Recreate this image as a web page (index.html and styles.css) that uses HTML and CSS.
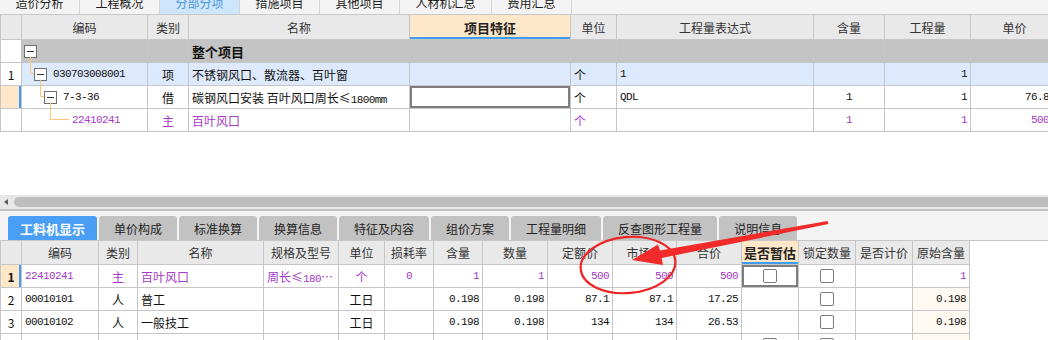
FILE: index.html
```html
<!DOCTYPE html>
<html lang="zh">

<head>
    <meta charset="UTF-8">
    <title>分部分项 - 工料机显示</title>
    <link rel="stylesheet" href="styles.css">
</head>

<body>
    <div class="sheet">
        <div class="top-tabs">
            <div class="ttab">造价分析</div>
            <div class="ttab">工程概况</div>
            <div class="ttab active">分部分项</div>
            <div class="ttab">措施项目</div>
            <div class="ttab">其他项目</div>
            <div class="ttab">人材机汇总</div>
            <div class="ttab">费用汇总</div>
        </div>

        <!-- 分部分项 list -->
        <div class="grid top-grid">
            <div class="row head">
                <div class="cell"></div>
                <div class="cell">编码</div>
                <div class="cell">类别</div>
                <div class="cell">名称</div>
                <div class="cell hl">项目特征</div>
                <div class="cell">单位</div>
                <div class="cell">工程量表达式</div>
                <div class="cell">含量</div>
                <div class="cell">工程量</div>
                <div class="cell">单价</div>
            </div>
            <div class="row group">
                <div class="cell idx"></div>
                <div class="cell code"><span class="fold"></span></div>
                <div class="cell"></div>
                <div class="cell l strong">整个项目</div>
                <div class="cell"></div>
                <div class="cell"></div>
                <div class="cell"></div>
                <div class="cell"></div>
                <div class="cell"></div>
                <div class="cell"></div>
            </div>
            <div class="row picked">
                <div class="cell idx">1</div>
                <div class="cell code"><span class="fold lv1"></span><span class="n">030703008001</span></div>
                <div class="cell">项</div>
                <div class="cell l">不锈钢风口、散流器、百叶窗</div>
                <div class="cell"></div>
                <div class="cell l">个</div>
                <div class="cell l n">1</div>
                <div class="cell"></div>
                <div class="cell r n">1</div>
                <div class="cell"></div>
            </div>
            <div class="row">
                <div class="cell idx cur"></div>
                <div class="cell code"><span class="fold lv2"></span><span class="n">7-3-36</span></div>
                <div class="cell">借</div>
                <div class="cell l"><span>碳钢风口安装 百叶风口周长≤<span class="n">1800mm</span></span></div>
                <div class="cell sel"></div>
                <div class="cell l">个</div>
                <div class="cell l n">QDL</div>
                <div class="cell n">1</div>
                <div class="cell r n">1</div>
                <div class="cell r n">76.84</div>
            </div>
            <div class="row pur">
                <div class="cell idx"></div>
                <div class="cell code"><span class="n lv3">22410241</span></div>
                <div class="cell">主</div>
                <div class="cell l">百叶风口</div>
                <div class="cell"></div>
                <div class="cell l">个</div>
                <div class="cell"></div>
                <div class="cell n">1</div>
                <div class="cell r n">1</div>
                <div class="cell r n">500.</div>
            </div>
        </div>

        <div class="blank"></div>

        <div class="hscroll">
            <span class="scroll-left"></span>
            <div class="thumb"></div>
        </div>

        <div class="btabs">
            <div class="btab active">工料机显示</div>
            <div class="btab">单价构成</div>
            <div class="btab">标准换算</div>
            <div class="btab">换算信息</div>
            <div class="btab">特征及内容</div>
            <div class="btab">组价方案</div>
            <div class="btab">工程量明细</div>
            <div class="btab">反查图形工程量</div>
            <div class="btab">说明信息</div>
        </div>

        <!-- 工料机 list -->
        <div class="grid low-grid">
            <div class="row head">
                <div class="cell"></div>
                <div class="cell">编码</div>
                <div class="cell">类别</div>
                <div class="cell">名称</div>
                <div class="cell">规格及型号</div>
                <div class="cell">单位</div>
                <div class="cell">损耗率</div>
                <div class="cell">含量</div>
                <div class="cell">数量</div>
                <div class="cell">定额价</div>
                <div class="cell">市场价</div>
                <div class="cell">合价</div>
                <div class="cell hl">是否暂估</div>
                <div class="cell">锁定数量</div>
                <div class="cell">是否计价</div>
                <div class="cell">原始含量</div>
            </div>
            <div class="row pur">
                <div class="cell idx cur bold">1</div>
                <div class="cell l n">22410241</div>
                <div class="cell">主</div>
                <div class="cell l">百叶风口</div>
                <div class="cell l"><span>周长≤<span class="n">180</span>…</span></div>
                <div class="cell">个</div>
                <div class="cell n">0</div>
                <div class="cell r n">1</div>
                <div class="cell r n">1</div>
                <div class="cell r n">500</div>
                <div class="cell r n">500</div>
                <div class="cell r n">500</div>
                <div class="cell sel"><span class="chk"></span></div>
                <div class="cell"><span class="chk"></span></div>
                <div class="cell"></div>
                <div class="cell r n">1</div>
            </div>
            <div class="row">
                <div class="cell idx">2</div>
                <div class="cell l n">00010101</div>
                <div class="cell">人</div>
                <div class="cell l">普工</div>
                <div class="cell"></div>
                <div class="cell">工日</div>
                <div class="cell"></div>
                <div class="cell r n">0.198</div>
                <div class="cell r n">0.198</div>
                <div class="cell r n">87.1</div>
                <div class="cell r n">87.1</div>
                <div class="cell r n">17.25</div>
                <div class="cell"></div>
                <div class="cell"><span class="chk"></span></div>
                <div class="cell"></div>
                <div class="cell r n soft">0.198</div>
            </div>
            <div class="row">
                <div class="cell idx">3</div>
                <div class="cell l n">00010102</div>
                <div class="cell">人</div>
                <div class="cell l">一般技工</div>
                <div class="cell"></div>
                <div class="cell">工日</div>
                <div class="cell"></div>
                <div class="cell r n">0.198</div>
                <div class="cell r n">0.198</div>
                <div class="cell r n">134</div>
                <div class="cell r n">134</div>
                <div class="cell r n">26.53</div>
                <div class="cell"></div>
                <div class="cell"><span class="chk"></span></div>
                <div class="cell"></div>
                <div class="cell r n soft">0.198</div>
            </div>
            <div class="row">
                <div class="cell idx">4</div>
                <div class="cell l n">01290011</div>
                <div class="cell">材</div>
                <div class="cell l">镀锌钢板</div>
                <div class="cell l">综合</div>
                <div class="cell">kg</div>
                <div class="cell"></div>
                <div class="cell r n">1.2</div>
                <div class="cell r n">1.2</div>
                <div class="cell r n">4.5</div>
                <div class="cell r n">4.5</div>
                <div class="cell r n">5.4</div>
                <div class="cell"><span class="chk"></span></div>
                <div class="cell"><span class="chk"></span></div>
                <div class="cell"></div>
                <div class="cell r n soft">1.2</div>
            </div>
        </div>

        <!-- tree connectors of the 编码 column -->
        <svg class="tree-lines" width="1048" height="340" viewBox="0 0 1048 340">
            <path d="M30.5 56.5V73.5H34 M40.5 79.5V96.5H44 M50.5 102.5V119.5H69" fill="none" stroke="#ffc477" stroke-width="1"/>
        </svg>

        <!-- red markup drawn on the screenshot -->
        <svg class="markup" width="1048" height="340" viewBox="0 0 1048 340">
            <ellipse cx="628" cy="265" rx="47.5" ry="28" transform="rotate(-5 628 265)" fill="none" stroke="#f02424" stroke-width="2.2"/>
            <polygon points="632,260 658,244.5 660,250.5 827.6,221 828.4,224 661.6,258 663,265" fill="#f22a2a"/>
        </svg>
    </div>
</body>

</html>
```

FILE: styles.css
```css
body {
    margin: 0;
    background-color: #fff;
    font-family: "Noto Sans CJK SC", "Liberation Sans", sans-serif;
    font-size: 12px;
    color: #111;
    overflow: hidden;
}

.sheet {
    position: relative;
    width: 1048px;
    height: 340px;
    overflow: hidden;
}

/* top page tabs, cut at the top edge */
.top-tabs {
    display: flex;
    height: 15px;
    box-sizing: border-box;
    overflow: hidden;
    background-color: #f4f4f4;
    border-bottom: 1px solid #c8c8c8;
}

.ttab {
    display: flex;
    align-items: flex-end;
    height: 14px;
    box-sizing: border-box;
    padding: 0 15.5px 5.5px;
    line-height: 12px;
    border-right: 1px solid #d4d4d4;
    color: #1c1c1c;
}

.ttab.active {
    background-color: #cde6fb;
    color: #4f97dc;
}

/* grids */
.grid {
    width: max-content;
    border-left: 1px solid #c6c6c6;
}

.grid .row {
    display: grid;
}

.top-grid .row {
    grid-template-columns: 21px 126px 41px 221px 161px 46px 197px 71px 86px 88px;
}

.low-grid .row {
    grid-template-columns: 21px 77px 39px 126px 75px 46px 49px 49px 65px 65px 64px 65px 57px 57px 57px 57px;
}

.cell {
    display: flex;
    align-items: center;
    justify-content: center;
    height: 23px;
    box-sizing: border-box;
    padding: 0 3px;
    border-right: 1px solid #c6c6c6;
    border-bottom: 1px solid #c6c6c6;
    white-space: nowrap;
    overflow: hidden;
}

.l {
    justify-content: flex-start;
}

.r {
    justify-content: flex-end;
}

.n {
    font-family: "Liberation Mono", monospace;
    font-size: 11px;
    letter-spacing: -0.6px;
}

.head .cell {
    height: 25px;
    background-color: #e9e9e9;
    color: #333;
}

.low-grid .head .cell {
    height: 24px;
}

.head .cell.hl {
    background-color: #ffe8c9;
    font-weight: bold;
    font-size: 13px;
    color: #222;
    box-shadow: inset 0 -2px 0 #3f9bf4;
}

.group .cell {
    background-color: #c4c4c4;
}

.picked .cell {
    background-color: #dde9fc;
}

.group .cell.idx,
.picked .cell.idx {
    background-color: #fff;
}

.strong {
    font-weight: bold;
    font-size: 13px;
}

.bold {
    font-weight: bold;
}

.cell.cur {
    background-color: #ffe8c9;
    box-shadow: inset -2px 0 0 #3f9bf4;
}

.cell.sel {
    box-shadow: inset 0 0 0 2px #7e7e7e;
}

.pur .cell {
    color: #a43ac5;
}

.pur .cell.idx {
    color: #111;
}

.cell.soft {
    background-color: #fff9f1;
}

/* tree column */
.code {
    justify-content: flex-start;
    padding-left: 2px;
}

.fold {
    display: inline-flex;
    align-items: center;
    justify-content: center;
    flex: none;
    width: 13px;
    height: 13px;
    box-sizing: border-box;
    margin-right: 6px;
    border: 1px solid #707070;
    background-color: #fff;
}

.fold::before {
    content: "";
    width: 7px;
    height: 1px;
    background-color: #333;
}

.fold.lv1 {
    margin-left: 10px;
}

.fold.lv2 {
    margin-left: 20px;
}

.lv3 {
    margin-left: 48px;
}

.chk {
    width: 14px;
    height: 14px;
    box-sizing: border-box;
    border: 1px solid #7c7c7c;
    border-radius: 2px;
    background-color: #fff;
}

.blank {
    height: 63px;
}

/* horizontal scroll bar */
.hscroll {
    display: flex;
    align-items: center;
    height: 16px;
    box-sizing: border-box;
    padding: 2px 0 2px 4px;
    background-color: #e8e8e8;
    border-bottom: 2px solid #c2c2c2;
}

.scroll-left {
    width: 0;
    height: 0;
    margin-right: 6px;
    border-right: 4px solid #5c5c5c;
    border-top: 3px solid transparent;
    border-bottom: 3px solid transparent;
}

.thumb {
    flex: 1;
    height: 10px;
    background-color: #bebebe;
    border-radius: 5px 0 0 5px;
}

/* lower tabs */
.btabs {
    display: flex;
    gap: 2px;
    height: 30px;
    box-sizing: border-box;
    padding: 5px 0 0 8px;
    background-color: #f4f4f4;
    border-bottom: 1px solid #c6c6c6;
}

.btab {
    display: flex;
    align-items: center;
    height: 24px;
    padding: 0 15px;
    background-color: #c2c2c2;
    border-radius: 3px 3px 0 0;
    color: #222;
    font-size: 12px;
}

.btab.active {
    padding: 0 12px;
    background-color: #4a9ef6;
    color: #fff;
    font-weight: bold;
    font-size: 13px;
}

/* overlays */
.tree-lines,
.markup {
    position: absolute;
    top: 0;
    left: 0;
    pointer-events: none;
}
```
